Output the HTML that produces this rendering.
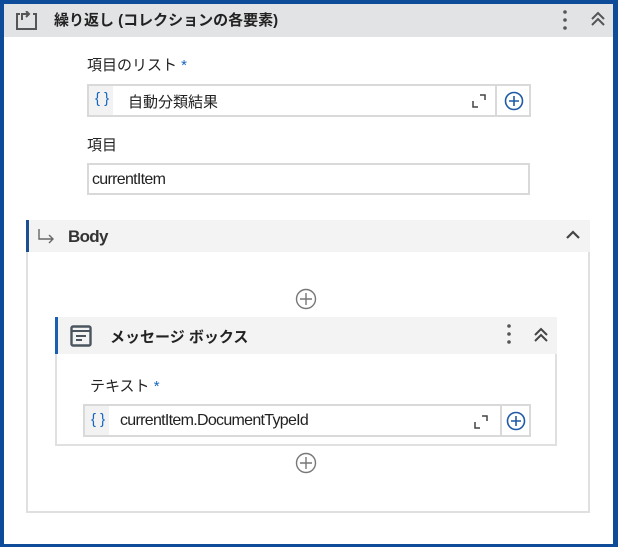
<!DOCTYPE html>
<html><head><meta charset="utf-8"><style>
*{box-sizing:border-box;margin:0;padding:0}
body{width:618px;height:547px;overflow:hidden;background:#fff;font-family:"Liberation Sans","Noto Sans CJK JP",sans-serif;color:#222}
.frame{position:absolute;left:0;top:0;width:618px;height:547px;border:4px solid #0e4b98;border-right-width:5px;border-bottom-width:3px}
.abs{position:absolute}
.t{font-size:15px}
.lat{letter-spacing:-0.7px}
.inp{position:absolute;border:2px solid #d9d9d9;background:#fff}
.star{color:#1565c0}
</style></head><body>
<div class="frame"></div>
<div class="abs" style="left:4px;top:4px;width:609px;height:33px;background:#e2e3e5"></div>
<svg class="abs" style="left:14px;top:11px" width="26" height="20" viewBox="0 0 26 20" fill="none" stroke="#555" stroke-width="2"><path d="M6 3H3v15h19V3h-3"/><path d="M8 9V3h7"/><path d="M12 0l3 3-3 3"/></svg>
<div class="abs" style="left:54px;top:9px;font-size:15px;font-weight:bold">繰り返し (コレクションの各要素)</div>
<svg class="abs" style="left:560px;top:9px" width="10" height="22"><circle cx="5" cy="3" r="1.8" fill="#555"/><circle cx="5" cy="11" r="1.8" fill="#555"/><circle cx="5" cy="19" r="1.8" fill="#555"/></svg>
<svg class="abs" style="left:589px;top:10px" width="18" height="18" fill="none" stroke="#555" stroke-width="2"><path d="M3 9l6-6 6 6M3 15l6-6 6 6"/></svg>

<div class="abs t" style="left:87px;top:54px">項目のリスト <span class="star">*</span></div>
<div class="inp" style="left:87px;top:84px;width:410px;height:33px"></div>
<div class="abs" style="left:89px;top:86px;width:24px;height:29px;background:#f2f2f2"></div>
<div class="abs" style="left:95px;top:90px;color:#1565c0;font-size:15px">{ }</div>
<div class="abs t" style="left:128px;top:91px">自動分類結果</div>
<svg class="abs" style="left:471px;top:93px" width="16" height="16" fill="none" stroke="#444" stroke-width="1.5"><path d="M2 8v6h5M9 2h5v5"/></svg>
<div class="inp" style="left:495px;top:84px;width:36px;height:33px"></div>
<svg class="abs" style="left:504px;top:91px" width="20" height="20" fill="none" stroke="#1f5aa6" stroke-width="1.6"><circle cx="10" cy="10" r="8.5"/><path d="M10 5v10M5 10h10"/></svg>

<div class="abs t" style="left:87px;top:134px">項目</div>
<div class="inp" style="left:87px;top:163px;width:443px;height:32px"></div>
<div class="abs t lat" style="left:92px;top:171px;font-size:16px">currentItem</div>

<div class="abs" style="left:26px;top:220px;width:564px;height:293px;border:2px solid #e0e0e0"></div>
<div class="abs" style="left:26px;top:220px;width:564px;height:32px;background:#f3f3f3;border-left:3px solid #1b4f8f"></div>
<svg class="abs" style="left:37px;top:228px" width="20" height="16" fill="none" stroke="#666" stroke-width="1.4"><path d="M2 1v10h14M12 7l4 4-4 4"/></svg>
<div class="abs lat" style="left:68px;top:227px;font-size:17px;font-weight:bold;color:#333">Body</div>
<svg class="abs" style="left:565px;top:229px" width="16" height="12" fill="none" stroke="#444" stroke-width="2.2"><path d="M2 9l6-6 6 6"/></svg>

<svg class="abs" style="left:295px;top:288px" width="22" height="22" fill="none" stroke="#777" stroke-width="1.4"><circle cx="11" cy="11" r="9.5"/><path d="M11 5v12M5 11h12"/></svg>

<div class="abs" style="left:55px;top:317px;width:502px;height:129px;border:2px solid #e0e0e0"></div>
<div class="abs" style="left:55px;top:317px;width:502px;height:37px;background:#f3f3f3;border-left:3px solid #1b5fb0"></div>
<svg class="abs" style="left:70px;top:325px" width="22" height="22" fill="none" stroke="#4a5560" stroke-width="2.4"><rect x="1.5" y="1.5" width="19" height="19" rx="1.5"/><path d="M2 6h18M6 11h10M6 15h6" stroke-width="2"/></svg>
<div class="abs" style="left:110px;top:326px;font-size:15px;font-weight:bold">メッセージ ボックス</div>
<svg class="abs" style="left:504px;top:323px" width="10" height="22"><circle cx="5" cy="3" r="1.8" fill="#555"/><circle cx="5" cy="11" r="1.8" fill="#555"/><circle cx="5" cy="19" r="1.8" fill="#555"/></svg>
<svg class="abs" style="left:532px;top:326px" width="18" height="18" fill="none" stroke="#444" stroke-width="2"><path d="M3 9l6-6 6 6M3 15l6-6 6 6"/></svg>

<div class="abs t" style="left:90px;top:375px">テキスト <span class="star">*</span></div>
<div class="inp" style="left:83px;top:404px;width:448px;height:33px"></div>
<div class="abs" style="left:85px;top:406px;width:24px;height:29px;background:#f2f2f2"></div>
<div class="abs" style="left:91px;top:411px;color:#1565c0;font-size:15px">{ }</div>
<div class="abs t lat" style="left:120px;top:412px;font-size:16px">currentItem.DocumentTypeId</div>
<svg class="abs" style="left:473px;top:414px" width="16" height="16" fill="none" stroke="#444" stroke-width="1.5"><path d="M2 8v6h5M9 2h5v5"/></svg>
<div class="abs" style="left:500px;top:406px;width:2px;height:29px;background:#d9d9d9"></div>
<svg class="abs" style="left:506px;top:411px" width="20" height="20" fill="none" stroke="#1f5aa6" stroke-width="1.6"><circle cx="10" cy="10" r="8.5"/><path d="M10 5v10M5 10h10"/></svg>

<svg class="abs" style="left:295px;top:452px" width="22" height="22" fill="none" stroke="#777" stroke-width="1.4"><circle cx="11" cy="11" r="9.5"/><path d="M11 5v12M5 11h12"/></svg>
</body></html>
